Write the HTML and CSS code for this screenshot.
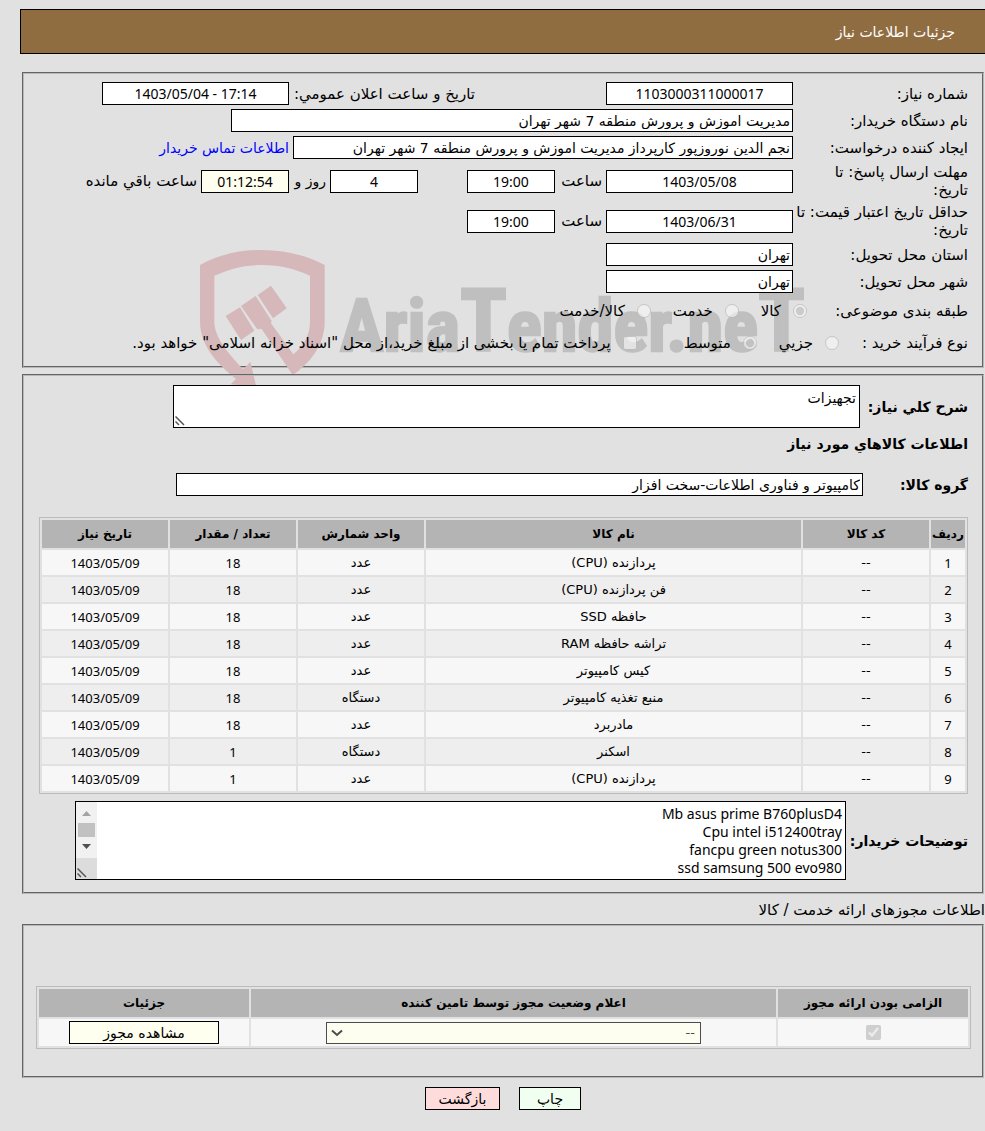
FILE: index.html
```html
<!DOCTYPE html>
<html lang="fa" dir="rtl">
<head>
    <meta charset="UTF-8">
    <meta name="viewport" content="width=device-width, initial-scale=1.0">
    <title>جزئیات اطلاعات نیاز</title>
    <link rel="stylesheet" href="styles.css">
</head>
<body>
    <h1 class="title">جزئیات اطلاعات نیاز</h1>

    <div class="content">
        <!-- اطلاعات اصلی نیاز -->
        <section class="box info">
            <svg class="watermark" viewBox="0 0 1890 480" aria-hidden="true">
                <g fill="#d6b8ba">
                    <path d="M60 90C115 60 175 45 245 45S375 60 434 90V260C434 330 390 385 338 420L245 282L232 283L183 213L227 183L275 258L273 265L340 358C372 330 390 300 390 260V122C345 102 300 90 245 90S150 102 103 122V260C103 310 150 360 190 403L211 380L229 455L152 448L168 432C110 385 60 330 60 260Z"/>
                    <path d="M137 243L180 217L223 287L183 315Z"/>
                    <path d="M233 180L273 152L320 220L279 250Z"/>
                </g>
                <text class="brand" x="480" y="348" direction="ltr">Aria<tspan class="brand-t">T</tspan>ender.ne<tspan class="brand-t">T</tspan></text>
            </svg>

            <div class="row">
                <label class="name" for="num">شماره نیاز:</label>
                <input class="field mid" id="num" type="text" value="1103000311000017" readonly>
                <label class="pub" for="pub">تاریخ و ساعت اعلان عمومي:</label>
                <input class="field mid" id="pub" type="text" dir="ltr" value="1403/05/04 - 17:14" readonly>
            </div>
            <div class="row">
                <label class="name" for="org">نام دستگاه خریدار:</label>
                <input class="field org" id="org" type="text" value="مدیریت اموزش و پرورش منطقه 7 شهر تهران" readonly>
            </div>
            <div class="row">
                <label class="name" for="creator">ایجاد کننده درخواست:</label>
                <input class="field creator" id="creator" type="text" value="نجم الدین نوروزپور کارپرداز مدیریت اموزش و پرورش منطقه 7 شهر تهران" readonly>
                <a class="contact" href="#">اطلاعات تماس خریدار</a>
            </div>
            <div class="row">
                <label class="name" for="reply">مهلت ارسال پاسخ: تا<br>تاریخ:</label>
                <input class="field mid" id="reply" type="text" value="1403/05/08" readonly>
                <label class="hour" for="replyHour">ساعت</label>
                <input class="field short" id="replyHour" type="text" value="19:00" readonly>
                <input class="field short days" id="days" type="text" value="4" readonly>
                <label class="day" for="days">روز و</label>
                <input class="field short timer" id="remain" type="text" value="01:12:54" readonly>
                <label class="after" for="remain">ساعت باقي مانده</label>
            </div>
            <div class="row">
                <label class="name" for="price">حداقل تاریخ اعتبار قیمت: تا<br>تاریخ:</label>
                <input class="field mid" id="price" type="text" value="1403/06/31" readonly>
                <label class="hour" for="priceHour">ساعت</label>
                <input class="field short" id="priceHour" type="text" value="19:00" readonly>
            </div>
            <div class="row">
                <label class="name" for="state">استان محل تحویل:</label>
                <input class="field place" id="state" type="text" value="تهران" readonly>
            </div>
            <div class="row">
                <label class="name" for="city">شهر محل تحویل:</label>
                <input class="field place" id="city" type="text" value="تهران" readonly>
            </div>
            <div class="row options">
                <span class="kind">طبقه بندی موضوعی:</span>
                <label class="opt"><input type="radio" name="kind" disabled checked>کالا</label>
                <label class="opt"><input type="radio" name="kind" disabled>خدمت</label>
                <label class="opt"><input type="radio" name="kind" disabled>کالا/خدمت</label>
            </div>
            <div class="row options">
                <span class="process">نوع فرآیند خرید :</span>
                <label class="opt"><input type="radio" name="process" disabled>جزیي</label>
                <label class="opt medium"><input type="radio" name="process" disabled checked>متوسط</label>
                <label class="opt"><input type="checkbox" disabled>پرداخت تمام یا بخشی از مبلغ خرید،از محل "اسناد خزانه اسلامی" خواهد بود.</label>
            </div>
        </section>

        <!-- کالاها -->
        <section class="box goods">
            <div class="line">
                <label class="strong desc-name" for="desc">شرح کلي نیاز:</label>
                <div class="area desc">
                    <textarea class="field" id="desc" readonly>تجهیزات</textarea>
                    <svg class="grip" viewBox="0 0 10 10" aria-hidden="true"><path d="M0.500 0.500L9 9M0.500 5.500L4 9" stroke="#555" stroke-width="1.500"/></svg>
                </div>
            </div>
            <h2 class="strong heading">اطلاعات کالاهاي مورد نیاز</h2>
            <div class="line">
                <label class="strong group-name" for="group">گروه کالا:</label>
                <input class="field group" id="group" type="text" value="کامپیوتر و فناوری اطلاعات-سخت افزار" readonly>
            </div>

            <table class="grid items">
                <thead>
                    <tr>
                        <th class="c-row">ردیف</th>
                        <th class="c-small">کد کالا</th>
                        <th>نام کالا</th>
                        <th class="c-small">واحد شمارش</th>
                        <th class="c-small">تعداد / مقدار</th>
                        <th class="c-small">تاریخ نیاز</th>
                    </tr>
                </thead>
                <tbody>
                    <tr><td class="n">1</td><td>--</td><td>پردازنده (CPU)</td><td>عدد</td><td class="n">18</td><td class="n">1403/05/09</td></tr>
                    <tr><td class="n">2</td><td>--</td><td>فن پردازنده (CPU)</td><td>عدد</td><td class="n">18</td><td class="n">1403/05/09</td></tr>
                    <tr><td class="n">3</td><td>--</td><td>حافظه SSD</td><td>عدد</td><td class="n">18</td><td class="n">1403/05/09</td></tr>
                    <tr><td class="n">4</td><td>--</td><td>تراشه حافظه RAM</td><td>عدد</td><td class="n">18</td><td class="n">1403/05/09</td></tr>
                    <tr><td class="n">5</td><td>--</td><td>کیس کامپیوتر</td><td>عدد</td><td class="n">18</td><td class="n">1403/05/09</td></tr>
                    <tr><td class="n">6</td><td>--</td><td>منبع تغذیه کامپیوتر</td><td>دستگاه</td><td class="n">18</td><td class="n">1403/05/09</td></tr>
                    <tr><td class="n">7</td><td>--</td><td>مادربرد</td><td>عدد</td><td class="n">18</td><td class="n">1403/05/09</td></tr>
                    <tr><td class="n">8</td><td>--</td><td>اسکنر</td><td>دستگاه</td><td class="n">1</td><td class="n">1403/05/09</td></tr>
                    <tr><td class="n">9</td><td>--</td><td>پردازنده (CPU)</td><td>عدد</td><td class="n">1</td><td class="n">1403/05/09</td></tr>
                </tbody>
            </table>

            <div class="line">
                <label class="strong notes-name" for="notes">توضیحات خریدار:</label>
                <div class="area notes">
                    <textarea class="field" id="notes" readonly>Mb asus prime B760plusD4
Cpu intel i512400tray
fancpu green notus300
ssd samsung 500 evo980</textarea>
                    <div class="scroll" aria-hidden="true">
                        <svg viewBox="0 0 21 56">
                            <path d="M6 14L10.500 9L15 14Z" fill="#a3a3a3"/>
                            <path d="M2 21H19V35H2Z" fill="#c1c1c1"/>
                            <path d="M6 42L10.500 47L15 42Z" fill="#505050"/>
                        </svg>
                    </div>
                    <svg class="grip" viewBox="0 0 10 10" aria-hidden="true"><path d="M0.500 0.500L9 9M0.500 5.500L4 9" stroke="#555" stroke-width="1.500"/></svg>
                </div>
            </div>
        </section>

        <!-- مجوزها -->
        <p class="caption">اطلاعات مجوزهای ارائه خدمت / کالا</p>
        <section class="box permits">
            <table class="grid permit">
                <thead>
                    <tr>
                        <th class="c-must">الزامی بودن ارائه مجوز</th>
                        <th>اعلام وضعیت مجوز توسط تامین کننده</th>
                        <th class="c-detail">جزئیات</th>
                    </tr>
                </thead>
                <tbody>
                    <tr>
                        <td><input type="checkbox" aria-label="الزامی بودن ارائه مجوز" disabled checked></td>
                        <td>
                            <span class="select">
                                <select aria-label="اعلام وضعیت مجوز توسط تامین کننده" disabled>
                                    <option>--</option>
                                </select>
                                <svg class="arrow" viewBox="0 0 12 8" aria-hidden="true"><path d="M1 1.500L6 6L11 1.500" fill="none" stroke="#4c4c4c" stroke-width="2"/></svg>
                            </span>
                        </td>
                        <td><button class="btn view" type="button">مشاهده مجوز</button></td>
                    </tr>
                </tbody>
            </table>
        </section>

        <div class="actions">
            <button class="btn print" type="button">چاپ</button>
            <button class="btn back" type="button">بازگشت</button>
        </div>
    </div>
</body>
</html>
```
FILE: styles.css
```css
* { margin: 0; padding: 0; box-sizing: border-box; }
body {
    background-color: #e1e1e1;
    color: #000;
    font: 14px/18px "DejaVu Sans", sans-serif;
}
input, textarea, select, button { font: inherit; color: inherit; }
.title {
    margin: 9px 0 18px;
    margin-left: 20px;
    padding: 13px 30px 12px;
    border: 1px solid #000;
    border-right: 0;
    background-color: #906d41;
    color: #fff;
    font-size: 14px;
    font-weight: normal;
}
.content { margin-left: 22px; }
.box {
    position: relative;
    z-index: 0;
    margin-right: 1px;
    border: 2px groove #b8b8b8;
}
.info {
    display: flex;
    flex-direction: column;
    gap: 4px;
    margin-bottom: 6px;
    padding: 8px 14px 10px;
}
.watermark {
    position: absolute;
    z-index: -1;
    left: 156px;
    top: 161px;
    width: 630px;
    height: 160px;
    overflow: visible;
}
.brand {
    font-family: "Liberation Sans Narrow", "Roboto Condensed", "DejaVu Sans Condensed", sans-serif;
    font-size: 218px;
    font-weight: bold;
    fill: #bfbfbf;
    stroke: #bfbfbf;
    stroke-width: 7px;
}
.brand-t { font-size: 260px; }

/* form rows */
.row { display: flex; align-items: center; font-size: 15px; white-space: nowrap; }
.name { width: 175px; }
.field {
    height: 23px;
    padding: 1px 2px;
    border: 1px solid #000;
    border-radius: 0;
    background-color: #fff;
    font-size: 14px;
    outline: none;
}
.mid, .short { font-family: "Noto Sans", "DejaVu Sans", sans-serif; text-align: center; }
.mid { width: 187px; }
.place { width: 187px; }
.short { width: 88px; }
.org { width: 562px; }
.creator { width: 500px; }
.pub { width: 186px; margin-right: 131px; }
.hour { width: 51px; padding-right: 4px; }
.days { margin-right: 49px; }
.day { width: 41px; padding-right: 4px; font-size: 14px; }
.after { padding-right: 4px; }
.timer { background-color: #fffff0; }
.contact {
    padding-right: 4px;
    color: #0000ff;
    font-size: 14px;
    text-decoration: none;
}
.options { height: 28px; }
.options + .options { height: 27px; }
.kind { width: 161px; }
.process { width: 129px; }
.opt { display: flex; align-items: center; margin-left: 22px; }
.opt input { width: 14px; height: 14px; margin-left: 12px; }
.medium { margin-left: 47px; }

/* goods */
.goods { padding: 9px 14px 12px; }
.line { display: flex; align-items: center; }
.strong { font-size: 14px; font-weight: bold; white-space: nowrap; }
.line .strong { margin-left: 5px; }
.line .desc-name { width: 103px; }
.line .group-name { width: 100px; }
.line .notes-name { width: 117px; }
.heading { margin: 7px 0 20px; }
.group { width: 687px; }
.area { position: relative; }
.area .field {
    display: block;
    width: 100%;
    height: 100%;
    padding: 3px;
    resize: none;
    overflow: hidden;
}
.desc { width: 687px; height: 43px; }
.notes { width: 771px; height: 79px; }
.notes .field { font-family: "Noto Sans", "DejaVu Sans", sans-serif; }
.grip { position: absolute; left: 2px; bottom: 2px; width: 10px; height: 10px; }
.scroll {
    position: absolute;
    left: 1px;
    top: 1px;
    bottom: 1px;
    width: 21px;
    background-color: #dcdcdc;
}
.scroll svg { display: block; width: 21px; height: 56px; background-color: #f1f1f1; }

/* tables */
.grid {
    table-layout: fixed;
    border: 1px solid #bbb;
    border-spacing: 2px;
    font-size: 13px;
    line-height: 18px;
    text-align: center;
}
.grid th {
    height: 28px;
    background-color: #b4b4b4;
    font-size: 12px;
    white-space: nowrap;
}
.grid td { height: 25px; background-color: #f7f7f7; }
.grid tbody tr:nth-child(even) td { background-color: #eee; }
.grid .n { font-family: "Noto Sans", "DejaVu Sans", sans-serif; }
.items { width: 929px; max-width: 100%; margin: 21px 0 7px; }
.c-row { width: 34px; }
.c-small { width: 126px; }

/* permits */
.caption { margin: 7px 0 5px; font-size: 15px; }
.permits { padding: 60px 11px 27px 12px; }
.permit { width: 100%; }
.permit td { height: 27px; vertical-align: middle; }
.permit input { display: block; width: 15px; height: 15px; margin: 0 auto; }
.c-must { width: 190px; }
.c-detail { width: 210px; }
.select { display: block; position: relative; width: 375px; margin: 0 auto; }
.select select {
    display: block;
    width: 100%;
    height: 22px;
    padding: 0 5px;
    appearance: none;
    border: 1px solid #4c4c4c;
    border-radius: 0;
    background-color: #fdfdf0;
    color: #4c4c4c;
    opacity: 1;
}
.arrow { position: absolute; left: 5px; top: 7px; width: 12px; height: 8px; }
.btn {
    height: 23px;
    border: 1px solid #000;
    background-color: #fffff0;
    font-size: 14px;
    line-height: 18px;
}
.view { display: block; width: 150px; margin: 0 auto; }
.actions {
    display: flex;
    justify-content: center;
    gap: 19px;
    margin: 9px 1px 0 0;
}
.print { width: 62px; background-color: #f0fff0; }
.back { width: 75px; background-color: #ffdcdc; }
```
